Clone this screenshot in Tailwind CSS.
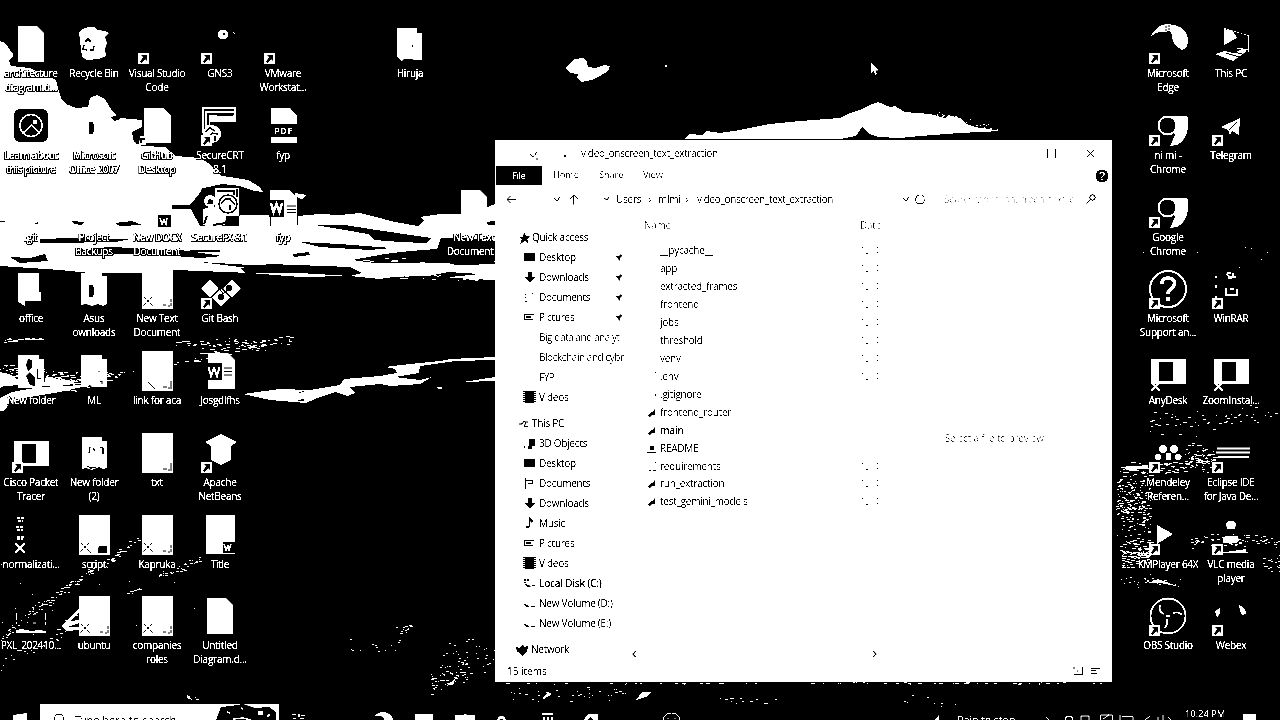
<!DOCTYPE html>
<html lang="en">
<head>
<meta charset="utf-8">
<title>Desktop</title>
<script src="https://cdn.jsdelivr.net/npm/@tailwindcss/browser@4"></script>
</head>
<body class="bg-black overflow-hidden">
<div class="relative w-[1280px] h-[720px] overflow-hidden bg-black text-white font-['Open_Sans',sans-serif] text-[10px] tracking-[-0.25px] contrast-[12]">

<!-- Wallpaper -->
<svg class="absolute inset-0" width="1280" height="720" viewBox="0 0 1280 720" shape-rendering="crispEdges">
  <g fill="#fff">
    <path d="M0 41L5 43L13 54V57L9 60L11 66L30 68L56 80L58 88L61 98L66 104L76 108L88 107L90 98L97 95L105 99L109 106L114 113L120 118L142 120V128L133 132L134 140L142 146L165 147L176 156L200 158L208 163L222 176L230 177L248 180L260 187L263 192L254 191L240 186L222 184L204 188L190 205L172 205V209L191 209L200 226H236L240 215L297 216L320 214L340 215L360 213L372 216L395 222L418 226L424 221L420 217L440 214L470 214L495 204V280L470 279L430 276L400 276L380 279L350 276L300 277L250 273L200 271L175 270L140 273L90 273L60 270L30 268L0 266Z"/>
    <path d="M295 193L307 195L302 199L294 197Z"/>
    <path d="M566 68L571 62L575 59L583 58L587 62L588 67L596 68L604 65L610 66L608 71L600 76L592 80L581 82L577 78L578 74L570 73Z"/>
    <path d="M685 138L690 134L702 135L706 131L720 133L740 130L770 124L800 121L840 118L850 113L862 109L870 105L878 102L890 107L895 106L905 112L930 114L945 118L948 115L960 118L966 124L975 127L1001 131L960 133L920 136L900 138L878 137L870 134L862 127L856 136L840 139H685Z"/>
    <path d="M243 394L280 389L310 390L340 385L344 379L380 376L397 373L395 369L385 367L410 364L440 361L450 359L495 357V360L455 361L420 366L419 373L395 377L420 380L432 377L420 384L390 386L380 384L350 387L355 393L348 396L335 392L320 397L306 403L270 400Z"/>
    <path d="M463 382L495 377V381ZM437 387L446 388L438 389Z"/>
    <path d="M0 398L12 392L40 387L90 385L60 392L12 400L4 411L0 411ZM0 372L14 376L22 385L4 386L0 388ZM46 376L60 380L80 381L60 386L44 386Z"/>
    <path d="M636 700L642 692L652 692L646 697ZM542 698L548 692L552 694L544 699ZM446 686L456 678L453 684Z"/>
    <path d="M62 626L70 617L79 608V612L71 621L79 620V623L68 627L79 627V630L66 631ZM1124 467L1148 465L1148 469L1126 470ZM1148 583L1158 579L1180 587L1160 583ZM1225 552L1246 549V552Z"/>
  </g>
  <g fill="#000">
    <path d="M315 225L345 225L370 229L431 238L426 243L400 242L375 240L368 234L345 230ZM300 242L340 244L391 248L370 250L320 247ZM293 254L309 252L310 255L294 257ZM352 260L385 254L410 251L437 249L441 238L495 240V264L462 265L430 263L375 263ZM240 268L270 264L350 267L362 273L350 276L300 273L245 273Z"/>
    <path d="M40 239L72 238L110 241L75 243L40 243ZM75 250L110 247L180 250L222 256L200 258L150 254L80 254ZM10 257L30 258L45 254L48 261L20 263ZM72 221L84 222L82 225L74 224ZM115 223L132 221L142 225L120 226ZM172 205L183 206L182 209L172 209ZM55 240L130 239L115 242Z"/>
    <path d="M111 117L117 115L120 119L114 121ZM132 132L144 126L150 134V144L134 142ZM428 276L448 272L480 274L450 277ZM298 400L304 399V401H298ZM485 222L495 221V225H488ZM0 221H5V222H0ZM35 223L38 222V224H35ZM200 262L250 265L320 268L300 270L240 267ZM190 250h30v2h-30zM140 250h18v1h-18z"/>
    <path d="M298 392L305 391L300 393Z"/>
  </g>
  <g id="specks" fill="#fff"></g>
</svg>

<!-- Icon shapes -->
<svg class="hidden">
  <defs>
    <g id="s"><rect x="1" y="30" width="11" height="11" fill="#fff"/><path fill="#000" d="M4 32h6v6l-2-2-3 4-2-1 3-5z"/></g>
    <g id="xm" stroke="#000" stroke-width="1" stroke-dasharray="3 1" fill="none"><path d="M7 29l9 9M15 29l-9 9M26 37h4M31 38h2M34 31v8"/></g>
    <g id="xw" stroke="#fff" stroke-width="2" fill="none"><path d="M3 32l9 9M12 32l-9 9"/></g>
    <g id="page"><path fill="#fff" d="M5 1h31v40H5z"/></g>
    <g id="doc"><path fill="#fff" d="M7 3H26L33 10V39H7Z"/></g>
    <g id="word"><path fill="#fff" d="M8 3H28L35 10V39H8Z"/><path fill="#000" d="M6 13h16v17H6z"/><path d="M24 18h8M24 21.500h8M24 25h8" stroke="#000" stroke-width="1"/><path d="M8.500 17l2.500 9 3-8 3 8 2.500-9" fill="none" stroke="#fff" stroke-width="2"/></g>
    <g id="folder"><path fill="#fff" d="M7 5H28V9H33V37H18L16 35L13 37L7 36Z"/></g>
    <g id="chrome"><path fill="#fff" d="M19 11H37Q40 11 40 14V22Q39 35 29 40L22 41L27 30Z"/><circle cx="19.500" cy="20.500" r="9" fill="#000" stroke="#fff" stroke-width="2"/></g>
    <g id="app"><path fill="#fff" fill-rule="evenodd" d="M3 9H38V34H3ZM11 12V31H25V12Z"/></g>

    <g id="i-doc"><use href="#doc"/></g>
    <g id="i-bin"><path fill="#fff" d="M5 9L9 6L14 4L20 4L24 7L31 8L35 10L31 14L33 20L31 26L32 33L25 36L13 37L8 34L6 18Z"/><path d="M11 19l3-3 3 3M10 22l-1 4 4 1M16 27h3l1-4" fill="none" stroke="#000" stroke-width="1.600"/></g>
    <g id="i-cut"><use href="#s"/></g>
    <g id="i-gns"><circle cx="23" cy="11.500" r="5" fill="#fff"/><circle cx="24" cy="11" r="1.500" fill="#000"/><path d="M33 9l2 2" stroke="#fff"/><use href="#s"/></g>
    <g id="i-learn"><rect x="3" y="4" width="34" height="33" rx="6" fill="#000"/><g fill="none" stroke="#fff" stroke-width="1.600"><circle cx="20" cy="20.500" r="11"/><path d="M12 28l8.500-8 8 8"/><circle cx="24" cy="17" r="1.500"/></g></g>
    <g id="i-office"><path fill="#000" d="M15 17h4v2h1v8h-1v2h-4z"/></g>
    <g id="i-github"><path fill="#fff" d="M7 3H26L34 10V38H7Z"/><path fill="#000" d="M-4 30l6-7 5 0v15l-8 1z"/><path fill="#fff" d="M3 31h6v9H2z"/><path d="M4 38v-4h4" stroke="#000" stroke-width="2" fill="none"/></g>
    <g id="i-crt"><path fill="#fff" d="M2 2H36V17H10V28H2Z"/><path fill="none" stroke="#000" stroke-width="1.500" d="M4.500 28V5H34M8 20V9H34"/><path fill="#000" d="M17 8h16v3H17z"/><circle cx="12" cy="29" r="9" fill="#fff"/><path d="M5 27l5-4 5 3M9 32l3-4 6 1M15 31v5" stroke="#000" stroke-width="1.500" fill="none"/><use href="#s"/></g>
    <g id="i-pdf"><path fill="#fff" d="M8 3H27L34 10V19H8ZM8 32H34V38H8Z"/></g>
    <g id="i-fx"><path fill="#000" d="M-9 17l8-7 3-9 37 0v38h-26l-8-6-12-7z"/><path fill="#fff" d="M15 1h24v28H24l-9-8z"/><g fill="none" stroke="#000" stroke-width="1.500"><circle cx="28" cy="17" r="9"/><path d="M21 17q3-6 9-5l5 6M30 18v5M37 2v8M17 4h17v4"/></g><circle cx="10" cy="14" r="6" fill="#fff"/><path d="M7 17l2-5 4 1v4z" fill="#000"/><path fill="#fff" d="M3 22l10-3 6 4 7 6-1 9-13 2-9-2z"/><path d="M7 29l-3 8M13 38l13-2" stroke="#000" stroke-width="2"/></g>
    <g id="i-word"><use href="#word"/></g>
    <g id="i-wordlight"><path fill="#fff" d="M7 3H26L34 10V38H7Z"/><path d="M7.500 28v11M34.500 10v28" stroke="#000"/><path fill="#000" d="M6 13h15v17H6z"/><path d="M24 19h9M24 22.500h9M24 25.500h9" stroke="#000"/><path d="M8 16l2.500 9 3-8 3 8 2.500-9" fill="none" stroke="#fff" stroke-width="2.600"/></g>
    <g id="i-wsmall"><path fill="#000" d="M21 28h13v12H21z"/><path d="M23 31l2 6 2-4 2 4 1-6" stroke="#fff" stroke-width="1.500" fill="none"/></g>
    <g id="i-open"><path fill="#fff" d="M7 5H28V24H30V33H14V38L7 34Z"/></g>
    <g id="i-asus"><path fill="#fff" d="M7 5H28V8H33V36L29 38L24 36L18 38L12 36L7 37Z"/><path fill="#000" d="M15 17h4v2h1v8h-1v2h-4z"/></g>
    <g id="i-txt"><use href="#page"/><use href="#xm"/></g>
    <g id="i-txtplain"><use href="#page"/><path d="M26 37h4M31 38h2M34 31v8" stroke="#000"/></g>
    <g id="i-link"><use href="#page"/><path d="M11 32l7 7M26 37h4M31 38h2M34 31v8" stroke="#000"/></g>
    <g id="i-git"><path fill="#fff" d="M1 20l9-8 9 8-9 9zM23 20l9-8 9 8-9 9zM12 29l9-8 9 8-9 10z"/><path d="M14 15l10 11M20 28l11-9" stroke="#000"/><circle cx="21" cy="29" r="3" fill="#000"/><circle cx="29" cy="20" r="3" fill="#000"/><use href="#s"/></g>
    <g id="i-photo"><path fill="#fff" d="M7 5H28V9H33V36L25 38L7 38Z"/><path fill="#000" d="M17 9l4 1v8l-4 3-2-6zM15 26l4-4 5 6v8l-5-1zM27 19v9h3v1h-4v-10z"/></g>
    <g id="i-folder"><use href="#folder"/><path d="M25 21v1M26 32l2-1v3" stroke="#000" fill="none"/></g>
    <g id="i-app"><use href="#app"/><use href="#s"/></g>
    <g id="i-appx"><use href="#app"/><use href="#xw"/></g>
    <g id="i-folder2"><path fill="#fff" d="M8 5H28V9H33V36L29 37L25 35L18 38L12 36L8 37Z"/><path d="M16 15l-1 6M19 16l2 3M26 15l3 1v6M13 34l4 2 5-1" stroke="#000" stroke-width="1.200" fill="none"/></g>
    <g id="i-bean"><path fill="#fff" d="M21 2L37 10L31 14V28L21 33L11 28V14L5 10Z"/><use href="#s"/></g>
    <g id="i-norm"><path d="M6 4h7M7 7h5M5 13h8M6 16h6M6 23h7M6 25h6" stroke="#fff" stroke-width="1.500" stroke-dasharray="3 1"/><path d="M4 29l10 10M14 29l-10 10" stroke="#fff" stroke-width="2"/></g>
    <g id="i-script"><use href="#page"/><path d="M7 29l10 10M15 29l-9 9" stroke="#000" stroke-dasharray="3 1"/><path fill="#000" d="M25 32h8v7h-9v-4z"/></g>
    <g id="i-title"><path fill="#fff" d="M6 1H35V40H6Z"/><path fill="#000" d="M23 28h13v11H23z"/><path d="M24 30l2 6 2-4 1 4 2-6" stroke="#fff" stroke-width="1.500" fill="none"/></g>
    <g id="i-pxl"><path d="M5.500 18v11M34.500 18v12M22 28h3M24 18v2" stroke="#fff" stroke-dasharray="7 2"/><path fill="#fff" d="M5 35l6-1 9 2 8-1 7 1v2H5z"/></g>
    <g id="i-hiruja"><path fill="#fff" d="M7 5H27V10H32V37L14 36L12 38L7 34Z"/><path fill="#000" d="M22 22h1v2h-1z"/></g>
    <g id="i-edge"><path fill="#fff" d="M2 14Q9 1 20 1Q40 3 40 18Q40 25 34 27Q24 22 24 13Q23 5 18 9Q9 8 2 14Z"/><path d="M18 3v7M21 2v8" stroke="#000" stroke-dasharray="2 1"/><use href="#s"/></g>
    <g id="i-pc"><path fill="#fff" d="M13 6L22 8L26 15L13 22ZM4 31L14 28L22 30L32 26L36 28L22 38Z"/><path d="M13 5L38 13" stroke="#fff" stroke-dasharray="2 1.500"/><path d="M37.500 13V29M26 25l12 2" stroke="#fff" fill="none"/><path d="M15 30l13 4M20 28l11 3" stroke="#000"/></g>
    <g id="i-chrome"><use href="#chrome"/><use href="#s"/></g>
    <g id="i-tele"><path fill="#fff" d="M10 22L29 13L28 30L21 26L19 30L17 25Z"/><path d="M18 25l8-8" stroke="#000"/><use href="#s"/></g>
    <g id="i-help"><circle cx="20" cy="21" r="18" fill="none" stroke="#fff" stroke-width="2"/><path d="M14 16q0-6 6-6t6.500 5q0 4-3.500 6t-3 5" fill="none" stroke="#fff" stroke-width="3.500"/><path fill="#fff" d="M18 29h4v4h-4z"/><use href="#s"/></g>
    <g id="i-rar"><path d="M5 8v2M5 17v3M5 28v2M15 6l4 3h6M17 10h4M16 5h4M22 5v4M15 20v7h11v-6M19 21h4" stroke="#fff" stroke-width="1.600" fill="none"/><use href="#s"/></g>
    <g id="i-mend"><g fill="#fff"><circle cx="15" cy="17" r="4"/><circle cx="26" cy="17" r="4"/><circle cx="10" cy="25" r="3"/><path d="M18 21h5v7h-5z"/><circle cx="30" cy="25" r="3"/></g><use href="#s"/></g>
    <g id="i-ecl"><path d="M6 16.500H39M5 20.500H39M7 25H38" stroke="#fff" stroke-width="1.800"/><use href="#s"/></g>
    <g id="i-km"><path fill="#fff" d="M9 11L25 20L9 30Z"/><use href="#s"/></g>
    <g id="i-vlc"><path fill="#fff" d="M17 7h6l2 3-1 5h-8l-1-5zM14 22h13l1 5-3 2H12V26zM12 38h25v1H12z"/><use href="#s"/></g>
    <g id="i-obs"><circle cx="20" cy="21" r="17.500" fill="none" stroke="#fff" stroke-width="1.800"/><path d="M12 10q-2 7 4 9M25 18q6-2 9 2M19 24q1 7-3 9M18 21h4" stroke="#fff" stroke-width="1.800" fill="none"/><use href="#s"/></g>
    <g id="i-webex"><path fill="#fff" d="M4 16l5-3v5l-3 5zM28 10q7 2 7 9l-4 1q-3-5-3-10z"/><use href="#s"/></g>
  </defs>
</svg>

<div id="desktop"></div>

<!-- Mouse pointer -->
<svg class="absolute left-[871px] top-[62px]" width="9" height="14"><path d="M0 0V11L2.500 9L4.500 13L6 12L4.500 8.500H7.500Z" fill="#fff"/></svg>
<div class="absolute left-[665px] top-[65px] w-0.5 h-0.5 bg-white"></div>

<!-- File Explorer window -->
<section class="absolute left-[495px] top-[140px] w-[617px] h-[542px] bg-white text-[#000] flex flex-col">
  <header class="flex items-center h-[26px] shrink-0 pt-px">
    <svg width="86" height="26" class="shrink-0"><path d="M35 13l3 3 5-6M42 17v2" stroke="#000" fill="none" stroke-dasharray="5 1"/><path fill="#000" d="M69 14h2v2h-2z"/></svg>
    <h1 class="grow text-[#1a1a1a] tracking-[-0.33px]">video_onscreen_text_extraction</h1>
    <svg width="66" height="26"><path d="M1.500 8v9M9.500 8v9M41 9l7 7M48 9l-7 7" stroke="#000" fill="none"/></svg>
  </header>
  <nav class="flex items-center h-[19px] shrink-0 text-[#444] text-[9.5px]">
    <span class="ml-px w-[46px] h-[19px] bg-black text-white flex items-center justify-center text-[9px]">File</span>
    <span class="w-[46px] pl-[11px]">Home</span><span class="w-[47px] pl-[11px]">Share</span><span class="grow pl-2">View</span>
    <svg width="14" height="14" class="mr-[3px]"><circle cx="7" cy="7" r="6.500" fill="#000"/><path d="M5 5.500q0-2 2.200-2t2 2q0 1-1.400 1.800t-.8 1.500M7 10v1.500" stroke="#fff" stroke-width="1.300" fill="none"/></svg>
  </nav>
  <div class="flex items-center h-[28px] shrink-0 text-[#222]">
    <svg width="121" height="20" class="shrink-0"><path d="M21 10.500H12M16 6.500l-4 4 4 4M59 9l3 3 3-4M78.500 15.500V6M75 10l4-4 4 4M109 9l3 2 2-3" stroke="#000" fill="none"/></svg>
    <span class="w-[42px]">Users&nbsp;&nbsp; ›</span><span class="w-[39px]">mlmi&nbsp; ›</span>
    <span class="w-[204px] tracking-[-0.35px]">video_onscreen_text_extraction</span>
    <svg width="43" height="20" class="shrink-0"><path d="M2 9l3 3 3-4" stroke="#000" fill="none"/><circle cx="19" cy="10.500" r="4.500" fill="none" stroke="#000" stroke-dasharray="20 3 2 3"/></svg>
    <span class="w-[141px] text-[#6a6a6a] tracking-[-0.32px] whitespace-nowrap">Search video_onscreen_text_e</span>
    <svg width="14" height="20"><path d="M1.500 14.500l4.500-4.500" stroke="#000"/><circle cx="7.500" cy="8.500" r="2.800" fill="none" stroke="#000"/></svg>
  </div>
  <div class="flex h-[448px] shrink-0">
    <aside id="side" class="w-[140px] shrink-0 pt-[14.5px] text-[#000]"></aside>
    <main class="w-[256px] shrink-0 pt-[5px]">
      <div class="flex h-[15px] items-center text-[#585858]"><span class="w-[225px] pl-[9px]">Name</span><span>Date</span></div>
      <div id="files" class="pt-[9px] text-[#181818]"></div>
      <svg width="256" height="10" class="mt-[138px] overflow-visible"><path d="M1 2l-3 3 3 3M238 2l3 3-3 3" stroke="#000" stroke-width="1.400" fill="none"/></svg>
    </main>
    <div class="grow flex justify-center pt-[218px] pr-3 text-[#555] tracking-[-0.2px] whitespace-nowrap">Select a file to preview.</div>
  </div>
  <footer class="flex items-center h-[20px] px-3 shrink-0 text-[#000]"><span class="grow tracking-normal">15 items</span>
    <svg width="28" height="10"><path d="M5 1v2M5 8.500h9M8 5h1M13.500 1v7M22 2.500h9M22 4.500h5M22 7.500h6" stroke="#000" fill="none" transform="translate(-3 0)"/></svg></footer>
</section>

<!-- Taskbar -->
<footer class="absolute left-0 top-[704px] w-[1280px] h-4 overflow-hidden flex">
  <svg width="40" height="16"><path d="M13 11L27 9V16H13Z" fill="#fff"/></svg>
  <div class="w-[239px] h-8 shrink-0 bg-white text-[#222] flex">
    <svg width="35" height="16"><circle cx="19" cy="14.500" r="4.500" stroke="#000" fill="none"/></svg>
    <span class="w-[140px] pt-[9px] leading-[14px] text-[11px] tracking-normal">Type here to search</span>
    <svg width="64" height="16"><path d="M1 16L6 3L16 2L28 0L40 4L54 3L61 8V16Z" fill="#000"/><path d="M12 8l3 1M26 4l2 1M44 8h3v2h-3zM18 15l10-1 8 2M52 13l3-3" stroke="#fff" stroke-width="1.500"/></svg>
  </div>
  <svg width="660" height="16" class="shrink-0"><g transform="translate(-279 0)" fill="#fff"><path d="M292 10h4v1h-4zM298 10h2v3h-2zM301 11h4v1h-4zM293 14h3v1h-3zM300 14h4v1h-4z"/><path d="M374 12Q378 8 384 8Q392 9 393 16H384Q384 11 374 12Z"/><path d="M415 10h18v6h-18zM455 11h8l2-1 3 1h7v5h-20zM542 9h11v2h-11zM543 13h2v3h-2zM547 13h2v3h-2zM551 13h2v3h-2z"/><path d="M497 16q1-4 4.500-4t4.500 4h-2q-3-3-5 0zM584 16q2-6 6-6h8v6h-5l-2-3-4 3z"/><path d="M663 16q1-7 8.500-7t8.500 7M668 14v1M675 14v1" fill="none" stroke="#fff"/><path d="M934 16l5-5 5 3 4 2z"/></g></svg>
  <span class="pl-[18px] pt-[9px] w-[107px] leading-[14px] shrink-0 text-[11px]">Rain to stop</span>
  <svg width="134" height="16" class="shrink-0"><g transform="translate(-1046 0)" fill="none" stroke="#fff"><path d="M1041 16l4-4 4 4M1065 16q0-4 4-4t4 4M1081 16v-4h8v4M1100.500 16v-5h12v5M1103 15l6-4M1120 11v5M1122 12.500h11v4M1145 16l5-4M1158 13v3M1163 11v5M1168 13l3 3"/></g></svg>
  <span class="w-[60px] shrink-0 pl-[5px] pt-[3px] leading-[14px] text-[9.5px] tracking-[-0.1px]">10:24 PM</span>
  <svg width="20" height="16"><path d="M3 10h13v6H3z" fill="#fff"/></svg>
</footer>
</div>

<script>
const desktop = document.getElementById('desktop');
// [centre x, label y, icon, label lines, outlined label]
const items = [
 [31,73,'doc',['architecture','diagram.d...'],1],[94,73,'bin',['Recycle Bin']],[157,73,'cut',['Visual Studio','Code']],[220,73,'gns',['GNS3']],[283,73,'cut',['VMware','Workstat...']],[410,73,'hiruja',['Hiruja']],
 [31,155,'learn',['Learn about','this picture'],1],[94,155,'office',['Microsoft','Office 2007'],1],[157,155,'github',['GitHub','Desktop'],1],[220,155,'crt',['SecureCRT','8.1'],1],[283,155,'pdf',['fyp']],
 [31,237,'none',['.git'],1],[94,237,'none',['Project','Backups'],1],[157,237,'wsmall',['New DOCX','Document'],1],[220,237,'fx',['SecureFX 8.1'],1],[283,237,'wordlight',['fyp'],1],[474,237,'doc',['New Text','Document 1'],1],
 [31,318.5,'open',['office']],[94,318.5,'asus',['Asus','ownloads']],[157,318.5,'txt',['New Text','Document']],[220,318.5,'git',['Git Bash']],
 [31,400,'photo',['New folder'],1],[94,400,'folder',['ML']],[157,400,'link',['link for aca']],[220,400,'word',['Josgdlfhs']],
 [31,482,'app',['Cisco Packet','Tracer']],[94,482,'folder2',['New folder','(2)']],[157,482,'txtplain',['txt']],[220,482,'bean',['Apache','NetBeans']],
 [31,564,'norm',['normalizati...']],[94,564,'script',['script'],1],[157,564,'txt',['Kapruka'],1],[220,564,'title',['Title']],
 [31,645,'pxl',['PXL_202410...'],1],[94,645,'txt',['ubuntu']],[157,645,'txt',['companies','roles']],[220,645,'doc',['Untitled','Diagram.d...']],
 [1168,73,'edge',['Microsoft','Edge']],[1231,73,'pc',['This PC']],[1168,155,'chrome',['ni mi -','Chrome']],[1231,155,'tele',['Telegram']],
 [1168,237,'chrome',['Google','Chrome']],[1168,318.5,'help',['Microsoft','Support an...']],[1231,318.5,'rar',['WinRAR']],
 [1168,400,'appx',['AnyDesk']],[1231,400,'appx',['ZoomInstal...']],[1168,482,'mend',['Mendeley','Referen...'],1],[1231,482,'ecl',['Eclipse IDE','for Java De...'],1],
 [1168,564,'km',['KMPlayer 64X'],1],[1231,564,'vlc',['VLC media','player'],1],[1168,645,'obs',['OBS Studio']],[1231,645,'webex',['Webex']]
];
desktop.innerHTML = items.map(([x,y,icon,lines,light]) => `
 <div class="absolute w-[76px] flex flex-col items-center" style="left:${x-38}px;top:${Math.floor(y)-50}px">
  <svg width="40" height="42" viewBox="0 0 40 42" class="overflow-visible"><use href="#i-${icon}"/>${icon==='pdf'?'<text x="20.5" y="29" text-anchor="middle" font-size="9" font-weight="700" letter-spacing="0.6" fill="#fff">PDF</text>':''}</svg>
  <div class="mt-0.5 text-center leading-[13.5px] whitespace-nowrap [-webkit-text-stroke:0.15px_#fff] ${light?'[text-shadow:1px_1px_0_#000,1px_0_0_#000,0_1px_0_#000,-1px_1px_0_#000]':''}">${lines.join('<br>')}</div>
 </div>`).join('');

const I = {
 star:'<path d="M7 1l2 4 4 0-3 3 2 5-4-3-5 3 2-5-3-2h4z"/>', desk:'<path d="M1 2h11v8H1z"/>', down:'<path d="M5 1h4v5h3l-5 6-5-6h3z"/>',
 docs:'<path d="M2 3h1v1H2zM2 6h1v1H2zM2 10h2v1H2zM9 2h1v1H9z"/>', docs2:'<path d="M2 1h1v11H2zM3 3h6v1H3zM5 6h5v1H5zM9 3h1v4H9z"/>', pics:'<path d="M1 3h10v1H1zM1 4h1v5H1zM2 8h8v1H2zM3 5h5v2H3z"/>',
 vid:'<path d="M2 0h9v12H2z"/><path d="M1 0v12M12 0v12" stroke="#000" stroke-width="2" stroke-dasharray="1 1"/>', pc:'<path d="M2 7h3l2-3 2 2-2 3 4 1M8 5h3" stroke="#000" fill="none"/>', obj:'<path d="M6 2h6v7H9v3H5v-3h1zM1 9h1v2H1z"/>',
 note:'<path d="M6 0h1l3 4-1 2-2-2v6q-3 3-4 0 1-2 3-1z"/>', disk:'<path d="M1 7l4 1 1 2H3zM8 9h4v1H8z"/>', diskc:'<path d="M1 2h2v2H1zM4 2h2v2H4zM1 5h2v1H1zM2 7l4 1 2 2H4zM9 8h3v1H9z"/>', net:'<path d="M0 4l4 1 3-4 1 3 4-1-1 6-5 4-3-4-2 0z"/>', none:'' };
// [starts a group, indent, icon, label, extra]
const side = [[0,22,'star','Quick access'],[0,28,'desk','Desktop','pin'],[0,28,'down','Downloads','pin'],[0,28,'docs','Documents','pin'],[0,28,'pics','Pictures','pin'],[0,28,'none','Big data and analyt'],[0,28,'none','Blockchain and cybr'],[0,28,'none','FYP'],[0,28,'vid','Videos'],
 [1,22,'pc','This PC'],[0,28,'obj','3D Objects'],[0,28,'desk','Desktop'],[0,28,'docs2','Documents'],[0,28,'down','Downloads'],[0,28,'note','Music'],[0,28,'pics','Pictures'],[0,28,'vid','Videos'],[0,28,'diskc','Local Disk (C:)','dark'],[0,28,'disk','New Volume (D:)'],[0,28,'disk','New Volume (E:)'],[1,21,'net','Network']];
document.getElementById('side').innerHTML = side.map(([g,p,ic,t,e]) => `
 <div class="flex items-center h-5 whitespace-nowrap ${g?'mt-1.5':''} ${e==='dark'?'font-semibold':''}" style="padding-left:${p}px">
  <svg width="13" height="13" class="shrink-0 ${p<28?'mr-0.5':'mr-[3px]'}" fill="#000">${I[ic]}</svg>
  <span class="shrink-0 ${e==='pin'?'w-[75px]':''} ${ic==='none'?'text-[#333] tracking-[-0.45px]':''}">${t}</span>${e==='pin'?'<svg width="9" height="9"><path d="M2 3l3 0 2-2 1 2-2 2v3l-2-2z" fill="#000"/></svg>':''}
 </div>`).join('');

const py='<path d="M1 9l3-4h1l3-3v6H5l-2 2z" fill="#000"/>';
const files=[['__pycache__',''],['app',''],['extracted_frames',''],['frontend',''],['jobs',''],['threshold',''],['venv',''],['.env','<path d="M8 1h1v1H8z"/>'],['.gitignore','<path d="M8 5h1v2H8z"/>'],['frontend_router',py],['main',py],['README','<path d="M3 3h4v4H3zM0 9h9v1H0z"/>'],['requirements','<path d="M8 1h1v1H8zM2 9h2v1H2zM6 9h3v1H6z"/>'],['run_extraction',py],['test_gemini_models',py]];
document.getElementById('files').innerHTML = files.map(([t,ic],i)=>`
 <div class="flex items-center h-[17.93px]"><svg width="25" height="11" class="pl-3 overflow-visible">${ic}</svg>
 <span class="w-[202px] ${i===10?'text-black font-semibold':''}">${t}</span>${i<8||i>11?'<svg width="18" height="9" fill="#000"><path d="M0 1h1v1H0zM4 7h2v1H4zM15 1h1v1h-1zM15 6h1v1h-1z"/></svg>':''}</div>`).join('');

// Surf and sand texture: short dashes scattered along bands [x1,y1,x2,y2,spread,count,max length]
let seed=7; const r=()=>(seed=(seed*16807)%2147483647)/2147483647;
const bands=[[0,374,80,382,11,170,5],[80,380,110,376,9,45,4],[110,376,235,352,2,28,5],[176,344,292,340,5,60,4],[200,349,270,347,5,32,5],[0,341,40,338,2,18,5],
 [0,640,40,605,8,40,2],[35,610,100,563,6,60,3],[100,568,140,536,5,34,3],[158,576,200,560,4,34,3],[125,594,140,588,2,10,3],[0,666,55,640,7,18,3],[55,635,80,618,9,18,3],
 [1116,500,1150,505,38,230,3],[1120,555,1150,552,16,120,4],[1185,455,1215,460,16,75,3],[1150,425,1280,412,18,60,3],[1190,540,1280,540,8,75,3],[1120,470,1215,462,9,70,5],[1120,582,1180,580,9,24,2],[1262,560,1280,565,10,20,3],
 [430,682,470,668,14,65,3],[390,635,410,625,6,12,3],[440,640,495,660,18,28,2],[340,648,400,646,12,14,2],[505,695,630,694,9,34,3],[720,700,780,700,4,14,3],[900,697,960,703,8,8,2],
 [495,683,1100,683,1,60,4],[350,262,495,268,8,50,9],[350,274,495,279,3,30,8],[930,112,1000,130,4,30,2],[186,697,198,699,3,9,3],[1110,220,1280,260,30,8,1],[0,600,230,600,60,20,1]];
document.getElementById('specks').innerHTML=bands.map(([a,b,c,d,s,n,l])=>{let o='';for(let i=0;i<n;i++){const t=r(),x=Math.round(a+(c-a)*t),y=Math.round(b+(d-b)*t+(r()+r()-1)*s);o+=`<rect x="${x}" y="${y}" width="${1+Math.floor(r()*l)}" height="1"/>`}return o}).join('');
</script>
</body>
</html>
